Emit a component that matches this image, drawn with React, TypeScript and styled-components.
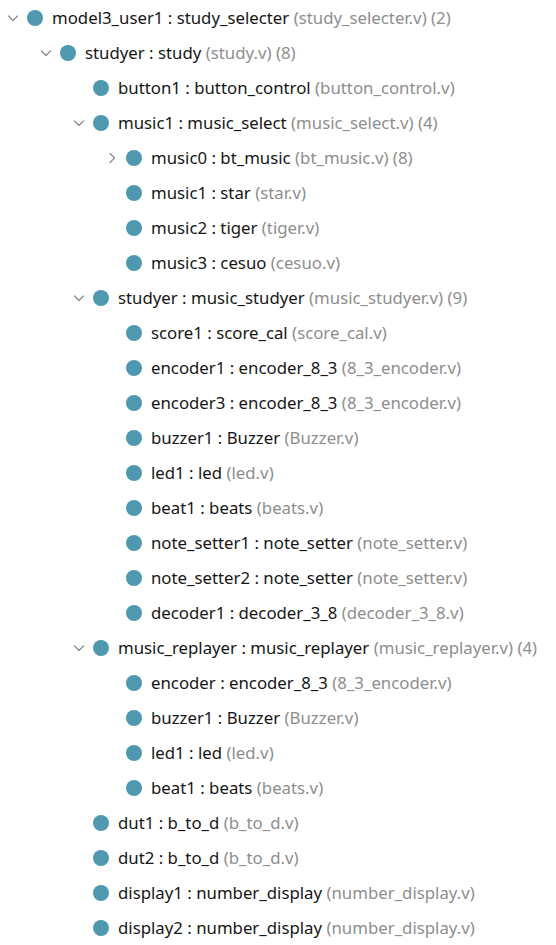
import { useState } from 'react';
import styled, { createGlobalStyle } from 'styled-components';

const Global = createGlobalStyle`
	html, body {
		margin: 0;
		padding: 0;
		background: #ffffff;
	}
	body {
		font-family: 'Noto Sans', 'Open Sans', sans-serif;
	}
`;

const Tree = styled.ul`
	list-style: none;
	margin: 0;
	padding: 0;
	width: 556px;
`;

const Row = styled.li<{ $level: number }>`
	display: flex;
	align-items: center;
	height: 35px;
	padding-left: ${(p) => 4 + p.$level * 33}px;
	font-size: 16.8px;
	color: #161616;
	white-space: nowrap;
	cursor: default;
`;

const Twisty = styled.span`
	width: 18px;
	height: 18px;
	display: flex;
	align-items: center;
	justify-content: center;
	margin-right: 5px;
	color: #8c8c8c;
`;

const Dot = styled.span`
	width: 16px;
	height: 16px;
	border-radius: 50%;
	background: #4f98b0;
	margin-right: 9px;
	flex-shrink: 0;
`;

const Label = styled.span`
	letter-spacing: 0;
`;

const Muted = styled.span`
	color: #8e8e8e;
`;

interface Node {
	id: string;
	name: string;
	type: string;
	file: string;
	count?: number;
	open?: boolean;
	children?: Node[];
}

const leaf = (id: string, name: string, type: string, file: string): Node => ({ id, name, type, file });

const data: Node = {
	id: 'root',
	name: 'model3_user1',
	type: 'study_selecter',
	file: 'study_selecter.v',
	count: 2,
	open: true,
	children: [
		{
			id: 's',
			name: 'studyer',
			type: 'study',
			file: 'study.v',
			count: 8,
			open: true,
			children: [
				leaf('b1', 'button1', 'button_control', 'button_control.v'),
				{
					id: 'm1',
					name: 'music1',
					type: 'music_select',
					file: 'music_select.v',
					count: 4,
					open: true,
					children: [
						{ id: 'm0', name: 'music0', type: 'bt_music', file: 'bt_music.v', count: 8, open: false, children: [] },
						leaf('ms1', 'music1', 'star', 'star.v'),
						leaf('ms2', 'music2', 'tiger', 'tiger.v'),
						leaf('ms3', 'music3', 'cesuo', 'cesuo.v'),
					],
				},
				{
					id: 'st',
					name: 'studyer',
					type: 'music_studyer',
					file: 'music_studyer.v',
					count: 9,
					open: true,
					children: [
						leaf('sc', 'score1', 'score_cal', 'score_cal.v'),
						leaf('e1', 'encoder1', 'encoder_8_3', '8_3_encoder.v'),
						leaf('e3', 'encoder3', 'encoder_8_3', '8_3_encoder.v'),
						leaf('bz', 'buzzer1', 'Buzzer', 'Buzzer.v'),
						leaf('l1', 'led1', 'led', 'led.v'),
						leaf('bt', 'beat1', 'beats', 'beats.v'),
						leaf('n1', 'note_setter1', 'note_setter', 'note_setter.v'),
						leaf('n2', 'note_setter2', 'note_setter', 'note_setter.v'),
						leaf('d1', 'decoder1', 'decoder_3_8', 'decoder_3_8.v'),
					],
				},
				{
					id: 'mr',
					name: 'music_replayer',
					type: 'music_replayer',
					file: 'music_replayer.v',
					count: 4,
					open: true,
					children: [
						leaf('re', 'encoder', 'encoder_8_3', '8_3_encoder.v'),
						leaf('rb', 'buzzer1', 'Buzzer', 'Buzzer.v'),
						leaf('rl', 'led1', 'led', 'led.v'),
						leaf('rt', 'beat1', 'beats', 'beats.v'),
					],
				},
				leaf('du1', 'dut1', 'b_to_d', 'b_to_d.v'),
				leaf('du2', 'dut2', 'b_to_d', 'b_to_d.v'),
				leaf('dp1', 'display1', 'number_display', 'number_display.v'),
				leaf('dp2', 'display2', 'number_display', 'number_display.v'),
			],
		},
	],
};

function Chevron({ open }: { open: boolean }) {
	return (
		<svg width="12" height="12" viewBox="0 0 12 12" fill="none" stroke="currentColor" strokeWidth="1.3" strokeLinecap="round" strokeLinejoin="round">
			{open ? <polyline points="1.5,4 6,8.5 10.5,4" /> : <polyline points="4,1.5 8.5,6 4,10.5" />}
		</svg>
	);
}

function TreeRows({ node, level, openMap, toggle }: { node: Node; level: number; openMap: Record<string, boolean>; toggle: (id: string) => void }) {
	const hasKids = node.children !== undefined;
	const open = openMap[node.id] ?? !!node.open;
	return (
		<>
			<Row $level={level} onClick={() => hasKids && toggle(node.id)}>
				<Twisty>{hasKids && <Chevron open={open} />}</Twisty>
				<Dot />
				<Label>
					{node.name} : {node.type} <Muted>({node.file})</Muted>
					{node.count !== undefined && <Muted> ({node.count})</Muted>}
				</Label>
			</Row>
			{hasKids && open && node.children!.map((c) => <TreeRows key={c.id} node={c} level={level + 1} openMap={openMap} toggle={toggle} />)}
		</>
	);
}

export default function App() {
	const [openMap, setOpenMap] = useState<Record<string, boolean>>({});
	const toggle = (id: string) => setOpenMap((m) => ({ ...m, [id]: !(m[id] ?? !!findOpen(data, id)) }));
	return (
		<>
			<Global />
			<Tree>
				<TreeRows node={data} level={0} openMap={openMap} toggle={toggle} />
			</Tree>
		</>
	);
}

function findOpen(node: Node, id: string): boolean | undefined {
	if (node.id === id) return node.open;
	for (const c of node.children ?? []) {
		const r = findOpen(c, id);
		if (r !== undefined) return r;
	}
	return undefined;
}
